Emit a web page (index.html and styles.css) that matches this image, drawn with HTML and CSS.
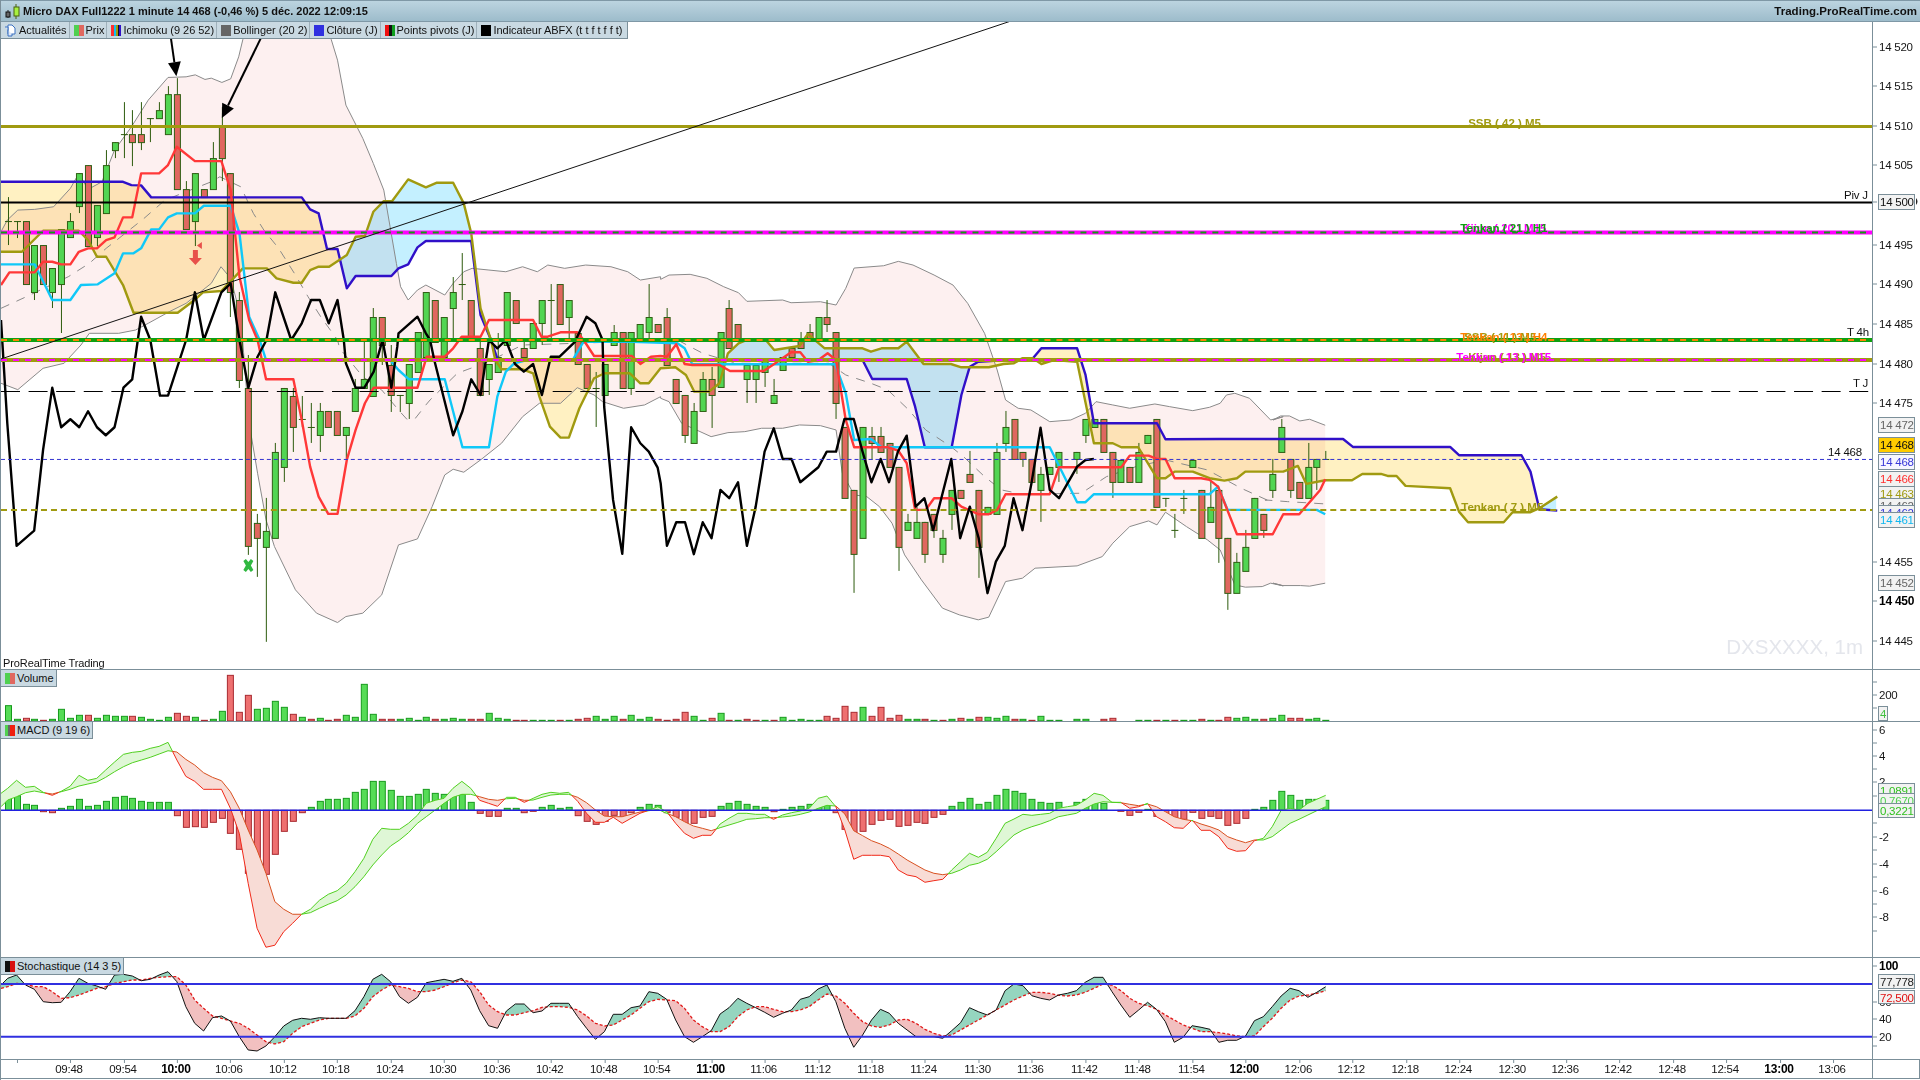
FILE: index.html
```html
<!DOCTYPE html>
<html lang="fr">

<head>
	<meta charset="UTF-8">
	<title>Micro DAX Full1222 | ProRealTime</title>
	<link rel="stylesheet" href="styles.css">
</head>

<body>
	<div class="window">
		<header class="title-bar">
			<svg class="title-icon" viewBox="0 0 18 15">
				<path d="M5 6V14" stroke="#222" />
				<rect x="3" y="8" width="4" height="5" fill="#666" stroke="#111" />
				<path d="M13 0V15" stroke="#486010" />
				<rect x="11" y="3" width="5" height="9" fill="#a8f040" stroke="#486010" />
			</svg>
			<span class="title-text">Micro DAX Full1222 1 minute 14 468 (-0,46 %) 5 déc. 2022 12:09:15</span>
			<span class="title-site">Trading.ProRealTime.com</span>
		</header>

		<section class="pane pane-main">
			<div class="plot">
				<svg id="main-chart" class="chart" viewBox="0 22 1872 647"></svg>
				<div class="legend">
					<span class="legend-item">
						<svg class="news-icon" viewBox="0 0 12 13">
							<path d="M4 1H8L11 4V10H4Z" fill="#fff" stroke="#3a70c0" />
							<path d="M1 3H4V12H8V10" fill="#dde8f8" stroke="#3a70c0" />
						</svg>
						Actualités
					</span>
					<span class="legend-item"><i class="swatch sw-price"></i>Prix</span>
					<span class="legend-item"><i class="swatch sw-ichimoku"></i>Ichimoku (9 26 52)</span>
					<span class="legend-item"><i class="swatch sw-bollinger"></i>Bollinger (20 2)</span>
					<span class="legend-item"><i class="swatch sw-close"></i>Clôture (J)</span>
					<span class="legend-item"><i class="swatch sw-pivots"></i>Points pivots (J)</span>
					<span class="legend-item legend-last"><i class="swatch sw-abfx"></i>Indicateur ABFX (t t f t f f t)</span>
				</div>
				<span class="broker">ProRealTime Trading</span>
				<span class="watermark">DXSXXXX, 1m</span>
			</div>
			<svg id="main-axis" class="axis" viewBox="1872 22 47 647"></svg>
		</section>

		<section class="pane pane-volume">
			<div class="plot">
				<svg id="volume-chart" class="chart" viewBox="0 670 1872 51"></svg>
				<div class="legend">
					<span class="legend-item"><i class="swatch sw-price"></i>Volume</span>
				</div>
			</div>
			<svg id="volume-axis" class="axis" viewBox="1872 670 47 51"></svg>
		</section>

		<section class="pane pane-macd">
			<div class="plot">
				<svg id="macd-chart" class="chart" viewBox="0 722 1872 235"></svg>
				<div class="legend">
					<span class="legend-item"><i class="swatch sw-macd"></i>MACD (9 19 6)</span>
				</div>
			</div>
			<svg id="macd-axis" class="axis" viewBox="1872 722 47 235"></svg>
		</section>

		<section class="pane pane-stoch">
			<div class="plot">
				<svg id="stoch-chart" class="chart" viewBox="0 958 1872 101"></svg>
				<div class="legend">
					<span class="legend-item"><i class="swatch sw-stoch"></i>Stochastique (14 3 5)</span>
				</div>
			</div>
			<svg id="stoch-axis" class="axis" viewBox="1872 958 47 101"></svg>
		</section>

		<section class="pane pane-time">
			<svg id="time-axis" class="chart" viewBox="0 1060 1872 18"></svg>
			<div class="time-corner"></div>
		</section>
	</div>
	<script src="chart.js"></script>
</body>

</html>
```

FILE: styles.css
```css
html,
body {
	margin: 0;
	height: 100%;
	overflow: hidden;
	background: #fff;
}

.window {
	width: 1920px;
	height: 1080px;
	box-sizing: border-box;
	display: flex;
	flex-direction: column;
	border-left: 1px solid #7b8f99;
	font-family: "Liberation Sans", Arial, sans-serif;
	color: #111;
}

.title-bar {
	height: 22px;
	box-sizing: border-box;
	flex: none;
	display: flex;
	align-items: center;
	border-top: 1px solid #7f98a6;
	border-bottom: 1px solid #7f98a6;
	background: linear-gradient(#bcd4e0, #9dbccb);
	padding: 0 3px 0 2px;
	font-size: 11.5px;
	font-weight: bold;
}

.title-icon {
	width: 18px;
	height: 15px;
	margin-right: 2px;
}

.title-text {
	flex: 1;
	font-size: 11px;
}

.title-site {
	letter-spacing: 0.05px;
}

.pane {
	flex: none;
	box-sizing: border-box;
	display: flex;
	border-bottom: 1px solid #7b8f99;
}

.pane-main {
	height: 648px;
}

.pane-volume {
	height: 52px;
}

.pane-macd {
	height: 236px;
}

.pane-stoch {
	height: 102px;
}

.pane-time {
	height: 19px;
}

.plot {
	position: relative;
	width: 1871px;
	flex: none;
}

.chart {
	display: block;
	width: 1871px;
	height: 100%;
	flex: none;
}

.axis {
	display: block;
	width: 47px;
	height: 100%;
	flex: none;
	border-left: 1px solid #7b8f99;
	overflow: hidden;
}

.time-corner {
	width: 47px;
	border-left: 1px solid #7b8f99;
	border-right: 1px solid #7b8f99;
}

.legend {
	position: absolute;
	left: 0;
	top: 0;
	display: flex;
	height: 16px;
	background: #c9d9e2;
	border-right: 1px solid #7b8f99;
	border-bottom: 1px solid #7b8f99;
	font-size: 11px;
}

.legend-item {
	display: flex;
	align-items: center;
	padding: 0 2px 0 3px;
	border-right: 1px solid #9fb0ba;
	white-space: nowrap;
	letter-spacing: -0.02px;
}

.legend-item:last-child {
	border-right: 0;
}

.legend-last {
	padding-right: 5px;
}

.news-icon {
	width: 12px;
	height: 13px;
	margin-right: 3px;
}

.swatch {
	display: block;
	width: 10px;
	height: 11px;
	margin: 0 2px 0 1px;
}

.sw-price {
	background: linear-gradient(90deg, #50d050 50%, #e06860 50%);
}

.sw-ichimoku {
	background: linear-gradient(90deg, #ff3030 25%, #10c0f0 25% 45%, #a09a10 45% 65%, #111 65% 82%, #3010c8 82%);
}

.sw-bollinger {
	background: #666;
}

.sw-close {
	background: #3030e0;
}

.sw-pivots {
	background: linear-gradient(90deg, #f01010 40%, #111 40% 65%, #10a020 65%);
}

.sw-abfx {
	background: #000;
}

.sw-macd {
	background: linear-gradient(90deg, #50d050 35%, #666 35% 50%, #f02010 50%);
}

.sw-stoch {
	background: linear-gradient(90deg, #111 50%, #d81010 50%);
}

.broker {
	position: absolute;
	left: 2px;
	bottom: 0;
	font-size: 11px;
	line-height: 12px;
	letter-spacing: -0.1px;
}

.watermark {
	position: absolute;
	right: 9px;
	bottom: 9px;
	font-size: 20.5px;
	line-height: 26px;
	color: #e4e6ec;
}

.tick {
	font-size: 11.5px;
	letter-spacing: -0.25px;
	fill: #151515;
}

.tick-strong {
	font-size: 12px;
	font-weight: bold;
	fill: #000;
}

.line-label {
	font-size: 11.5px;
	font-weight: bold;
}

.plain-label {
	font-size: 11.5px;
	letter-spacing: -0.2px;
	fill: #111;
}

.cloud {
	mix-blend-mode: multiply;
}

svg text {
	font-family: "Liberation Sans", Arial, sans-serif;
}
```

FILE: chart.js
```js
// Price chart panes. Coordinates are screen pixels, each svg viewBox is set up for that.
const NS = 'http://www.w3.org/2000/svg';
const X0 = 176; // x of the 10:00 bar
const DX = 8.91; // px per minute
const xi = (i) => X0 + DX * i;

function el(parent, name, attrs, text) {
	const node = document.createElementNS(NS, name);
	for (const k in attrs) node.setAttribute(k, attrs[k]);
	if (text !== undefined) node.textContent = text;
	parent.appendChild(node);
	return node;
}
const pts = (list) => list.map((p) => p[0].toFixed(1) + ',' + p[1].toFixed(1)).join(' ');
function poly(svg, list, color, width, dash) {
	const attrs = { points: pts(list), fill: 'none', stroke: color, 'stroke-width': width, 'stroke-linejoin': 'round' };
	if (dash) attrs['stroke-dasharray'] = dash;
	return el(svg, 'polyline', attrs);
}

// the values below were read off zoomed crops, so each helper converts its own crop
const z1 = (l) => l.map((p) => [p[0] / 2.376, p[1] / 3]);
const z2 = (l) => l.map((p) => [p[0] / 2.376, 340 + p[1] / 3]);
const z3 = (l) => l.map((p) => [660 + p[0] / 2.376, 260 + p[1] / 3]);
const z5 = (l) => l.map((p) => [1220 + p[0] / 2.24, 320 + p[1] / 3]);

function interp(line, x) {
	if (x <= line[0][0]) return line[0][1];
	for (let i = 1; i < line.length; i++) {
		if (x <= line[i][0]) {
			const t = (x - line[i - 1][0]) / (line[i][0] - line[i - 1][0] || 1);
			return line[i - 1][1] + t * (line[i][1] - line[i - 1][1]);
		}
	}
	return line[line.length - 1][1];
}

// split two series with the same x values in runs where a stays above or below b
function runs(a, b) {
	const out = [];
	let cur = null;
	for (let i = 0; i < a.length; i++) {
		const up = a[i][1] <= b[i][1];
		if (cur && cur.up !== up) {
			const d0 = a[i - 1][1] - b[i - 1][1];
			const d1 = a[i][1] - b[i][1];
			const t = d0 / (d0 - d1 || 1);
			const cross = [a[i - 1][0] + t * (a[i][0] - a[i - 1][0]), a[i - 1][1] + t * (a[i][1] - a[i - 1][1])];
			cur.a.push(cross);
			cur.b.push(cross);
			out.push(cur);
			cur = { up: up, a: [cross], b: [cross] };
		}
		if (!cur) cur = { up: up, a: [], b: [] };
		cur.a.push(a[i]);
		cur.b.push(b[i]);
	}
	if (cur) out.push(cur);
	return out;
}
function bandFill(svg, parts, upColor, downColor, cls) {
	parts.forEach((r) => {
		const attrs = { points: pts(r.a.concat(r.b.slice().reverse())), fill: r.up ? upColor : downColor };
		if (cls) attrs.class = cls;
		el(svg, 'polygon', attrs);
	});
}

/* ---------- main pane data ---------- */
const bbUpper = z1([[0, 695], [15, 660], [40, 630], [80, 628], [125, 620], [165, 565], [185, 520], [207, 568], [240, 545], [270, 450], [310, 380], [350, 300], [397, 232], [440, 230], [462, 224], [485, 238], [500, 234], [525, 247], [546, 236], [565, 170], [575, 118], [600, 30], [760, 30], [785, 118], [800, 180], [820, 315], [860, 415], [885, 490], [910, 570], [925, 680], [940, 790], [950, 860], [968, 900], [990, 870], [1010, 855], [1055, 885], [1075, 850], [1100, 815], [1120, 805], [1160, 810], [1200, 815], [1240, 800], [1275, 815], [1300, 795], [1340, 805], [1390, 795], [1450, 800], [1490, 815], [1520, 840], [1568, 830]])
	.concat(z3([[0, 58], [20, 45], [70, 43], [110, 55], [150, 80], [185, 98], [205, 124], [290, 120], [310, 128], [380, 125], [417, 135], [440, 85], [460, 24], [530, 17], [565, 4], [600, 15], [650, 45], [695, 75], [730, 130], [770, 220], [800, 330], [820, 420], [850, 445], [880, 450], [925, 485], [975, 480], [1010, 460], [1035, 425], [1075, 435], [1115, 445], [1175, 432], [1210, 440], [1265, 452], [1305, 442], [1330, 430], [1345, 405], [1365, 400], [1400, 415], [1450, 480], [1480, 470]]))
	.concat(z5([[118, 300], [135, 288], [155, 288], [178, 303], [200, 298], [235, 316]]));
const bbLower = z2([[0, 130], [40, 149], [100, 85], [150, 70], [190, 15]])
	.concat(z1([[210, 1000], [280, 1000], [320, 990], [350, 970], [400, 935], [440, 910], [470, 880], [500, 850], [523, 800], [546, 835], [570, 950]]))
	.concat(z2([[590, 250], [610, 400], [630, 540], [650, 620], [700, 750], [750, 820], [800, 848], [820, 830], [860, 820], [905, 765], [945, 615], [990, 597], [1025, 500], [1055, 405], [1075, 388], [1100, 397], [1140, 360], [1190, 310], [1240, 230], [1280, 190], [1330, 190], [1370, 143], [1410, 165], [1430, 185], [1480, 205], [1530, 195], [1568, 170]]))
	.concat(z3([[0, 415], [20, 425], [50, 490], [85, 510], [120, 530], [160, 518], [200, 515], [240, 505], [290, 505], [330, 495], [380, 497], [417, 510], [432, 640], [460, 705], [490, 710], [520, 740], [550, 790], [580, 885], [620, 960], [670, 1045], [710, 1065], [755, 1080], [780, 1072], [820, 965], [860, 955], [890, 925], [990, 918], [1050, 890], [1075, 850], [1115, 800], [1160, 783], [1180, 795], [1200, 757], [1250, 800], [1300, 840], [1330, 870], [1365, 975], [1390, 982], [1430, 980], [1450, 970], [1480, 978]]))
	.concat(z5([[118, 790], [140, 797], [180, 797], [200, 799], [235, 790]]));
const bbMid = z1([[0, 925], [60, 890], [160, 830], [210, 790], [250, 745], [290, 705], [340, 655], [390, 600], [440, 575], [500, 545], [520, 530], [570, 560], [600, 640], [625, 690], [660, 745], [700, 825], [730, 890], [760, 950], [800, 1020]])
	.concat(z2([[805, 25], [860, 110], [905, 150], [945, 210], [965, 238], [985, 235], [1010, 195], [1020, 180], [1085, 100], [1110, 88], [1150, 70], [1240, 15]]))
	.concat(z3([[40, 240], [100, 280], [180, 310], [400, 310], [440, 345], [500, 370], [540, 390], [590, 450], [630, 510], [690, 560], [720, 590], [770, 650], [810, 690], [860, 703], [1000, 700], [1060, 650], [1130, 620], [1200, 600], [1300, 630], [1380, 685], [1450, 725]]))
	.concat(z5([[100, 540], [150, 545], [235, 552]]));

const spanB = z1([[0, 545], [290, 545], [310, 555], [333, 556], [357, 592], [715, 592], [735, 628], [755, 640], [775, 747], [800, 747], [822, 865], [843, 828], [928, 828], [945, 805], [968, 793], [990, 742], [1010, 723], [1118, 723], [1140, 945], [1165, 1020]])
	.concat([[497, 360]])
	.concat(z3([[480, 300], [503, 357], [585, 357], [605, 440], [628, 562], [692, 562], [715, 405], [735, 320], [755, 305], [885, 295], [905, 265], [990, 265], [1010, 345], [1030, 490], [1180, 490], [1200, 538]]))
	.concat(z5([[0, 357], [275, 357], [297, 381], [515, 381], [535, 406], [675, 406], [695, 455], [715, 568], [755, 572]]));
const spanA = z1([[0, 755], [50, 755], [100, 692], [185, 692], [207, 720], [228, 770], [250, 770], [290, 855], [315, 938], [420, 938], [460, 900], [480, 877], [524, 873], [575, 805], [632, 805], [655, 835], [695, 848], [715, 848], [735, 810], [755, 800], [780, 800], [822, 765], [843, 710], [865, 708], [885, 635], [910, 603], [930, 603], [968, 538], [1010, 562], [1035, 548], [1075, 548], [1100, 610], [1118, 700], [1140, 925], [1165, 1020]])
	.concat(z2([[1175, 60], [1190, 88], [1240, 88], [1265, 100], [1280, 170], [1305, 260], [1330, 293], [1350, 293], [1375, 205], [1410, 115], [1435, 100], [1495, 100], [1520, 130], [1540, 130], [1568, 85]]))
	.concat(z3([[35, 322], [60, 345], [80, 395], [115, 395], [140, 370], [160, 280], [185, 250], [205, 240], [250, 240], [270, 270], [330, 258], [350, 222], [390, 265], [480, 265], [500, 275], [525, 265], [565, 265], [585, 245], [625, 312], [690, 312], [715, 322], [780, 322], [815, 312], [840, 310], [860, 295], [885, 295], [905, 312], [935, 300], [990, 305], [1030, 550], [1075, 550], [1095, 562], [1135, 562], [1180, 655], [1200, 655], [1222, 635], [1265, 635], [1305, 655], [1340, 662], [1370, 655], [1390, 635], [1480, 635], [1515, 618], [1535, 672]]))
	.concat(z5([[235, 481], [295, 481], [318, 462], [360, 462], [375, 468], [395, 468], [415, 498], [515, 505], [535, 575], [555, 607], [635, 607], [655, 577], [695, 577], [715, 565], [755, 530]]));
const tenkan = z1([[0, 855], [20, 817], [80, 817], [100, 785], [122, 785], [143, 793], [165, 793], [185, 755], [207, 745], [228, 745], [250, 720], [270, 712], [290, 652], [312, 652], [333, 520], [376, 520], [397, 495], [418, 440], [461, 483], [524, 483], [546, 570], [567, 830], [590, 960], [610, 1020]])
	.concat(z2([[630, 118], [695, 118], [715, 240], [735, 380], [755, 470], [778, 522], [800, 522], [822, 360], [843, 270], [865, 190], [886, 143], [990, 143], [1012, 50], [1055, 50], [1075, 25]]))
	.concat(z1([[1095, 1010], [1140, 1010], [1160, 960], [1265, 960], [1285, 1010], [1300, 1010], [1330, 997], [1370, 997], [1385, 1020]]))
	.concat(z2([[1410, 48], [1500, 48], [1520, 72], [1545, 50], [1568, 48]]))
	.concat(z3([[15, 290], [37, 253], [57, 312], [75, 315], [140, 315], [165, 333], [245, 333], [270, 312], [310, 277], [332, 277], [350, 305], [375, 300], [397, 280], [417, 300], [440, 480], [460, 562], [540, 562], [565, 572], [585, 610], [605, 750], [630, 750], [650, 715], [692, 715], [715, 740], [755, 763], [780, 763], [800, 750], [820, 703], [925, 703], [947, 622], [1095, 622], [1115, 587], [1160, 587], [1180, 597], [1200, 597], [1222, 655], [1285, 655], [1305, 660], [1325, 680], [1370, 823], [1455, 823], [1480, 763], [1518, 763], [1568, 690]]))
	.concat(z5([[235, 478]]));
const kijun = z1([[0, 793], [80, 793], [122, 900], [165, 900], [190, 855], [230, 853], [270, 820], [290, 760], [315, 760], [333, 745], [357, 688], [376, 688], [397, 652], [418, 640], [461, 640], [482, 617], [546, 617], [567, 700], [590, 950], [615, 1020]])
	.concat(z2([[630, 60], [925, 60], [945, 90], [970, 118], [1055, 118], [1097, 322], [1160, 322], [1180, 170], [1200, 95], [1220, 70], [1250, 60], [1360, 58], [1385, 5], [1500, 5]]))
	.concat(z3([[40, 250], [57, 265], [75, 313], [415, 313], [440, 400], [460, 540], [500, 537], [525, 562], [925, 562], [990, 727], [1010, 727], [1030, 703], [1305, 703], [1325, 680], [1348, 750], [1560, 750]]))
	.concat(z5([[235, 583]]));
const abfx = z1([[0, 960]])
	.concat(z2([[15, 250], [37, 618], [79, 572], [100, 330], [122, 143], [143, 262], [165, 238], [186, 262], [207, 214], [228, 262], [249, 286], [270, 262], [291, 143], [312, 118]]))
	.concat(z1([[333, 950]]))
	.concat(z2([[355, 0], [378, 167], [397, 167], [440, 0]]))
	.concat(z1([[461, 877], [482, 1020], [524, 877], [546, 850], [567, 1020]]))
	.concat(z2([[588, 143], [610, 50], [631, 0]]))
	.concat(z1([[652, 877], [690, 1020], [715, 970], [737, 900], [758, 900], [779, 970], [800, 900], [815, 1020]]))
	.concat(z2([[820, 70], [843, 143], [864, 143], [886, 95], [907, 0], [928, 143], [942, 20]]))
	.concat(z1([[945, 1000], [990, 950], [1010, 1000], [1020, 1020]]))
	.concat(z2([[1030, 60], [1075, 286], [1097, 214], [1118, 118], [1140, 165], [1160, 0], [1180, 25], [1200, 0], [1222, 72], [1243, 95], [1265, 72], [1286, 165], [1307, 50], [1328, 50], [1365, 5]]))
	.concat(z1([[1370, 1010], [1392, 950], [1413, 970], [1430, 1020]]))
	.concat(z2([[1434, 200], [1455, 480], [1477, 642], [1498, 262], [1520, 310], [1540, 335], [1561, 383]]))
	.concat(z3([[0, 670], [15, 858], [37, 787], [58, 787], [79, 883], [100, 787], [121, 835], [142, 690], [163, 715], [184, 667], [205, 858], [226, 740], [247, 575], [269, 505], [290, 597], [311, 597], [332, 667], [375, 622], [395, 575], [417, 575], [437, 477], [459, 477], [480, 575], [501, 667], [523, 597], [543, 667], [564, 575], [585, 527], [606, 740], [627, 715], [648, 811], [691, 597], [712, 835], [735, 740], [756, 835], [777, 1000], [797, 905], [818, 858], [839, 715], [860, 811], [882, 667], [903, 503], [925, 690], [947, 715], [990, 620], [1010, 600], [1030, 597]]));

// bars from i = -19 (09:41): [body top, body bottom, high, low, colour]
const bars = [
	[221, 221, 197, 245, 'd'], [221, 221, 221, 238, 'd'], [221, 284, 221, 284, 'r'], [245, 292, 245, 300, 'g'], [245, 284, 245, 284, 'r'],
	[268, 292, 268, 308, 'g'], [229, 284, 229, 333, 'g'], [221, 237, 213, 237, 'g'], [173, 206, 173, 213, 'g'], [165, 246, 165, 246, 'r'],
	[205, 237, 205, 246, 'g'], [165, 213, 150, 213, 'g'], [142, 150, 142, 158, 'g'], [134, 134, 102, 158, 'd'], [134, 142, 110, 166, 'r'],
	[134, 142, 102, 150, 'r'], [118, 118, 118, 142, 'd'], [110, 118, 102, 118, 'g'], [94, 134, 86, 134, 'g'],
	[94, 189, 78, 189, 'r'], [189, 229, 181, 229, 'r'], [173, 221, 173, 246, 'g'], [189, 197, 189, 197, 'r'], [158, 189, 142, 189, 'g'],
	[126, 158, 107, 181, 'r'], [173, 292, 173, 317, 'r'], [300, 380, 292, 388, 'r'], [388, 546, 355, 555, 'r'], [523, 538, 514, 577, 'r'],
	[531, 547, 498, 642, 'g'], [452, 538, 443, 538, 'g'], [388, 467, 388, 482, 'g'], [396, 427, 388, 452, 'r'], [419, 419, 396, 427, 'd'],
	[427, 427, 403, 443, 'd'], [411, 435, 403, 452, 'g'], [411, 427, 411, 427, 'r'], [411, 435, 411, 435, 'r'], [427, 435, 427, 459, 'g'],
	[388, 411, 379, 411, 'g'], [379, 388, 340, 388, 'g'], [317, 396, 308, 396, 'g'], [317, 345, 317, 365, 'r'], [365, 395, 345, 412, 'r'],
	[395, 395, 395, 412, 'd'], [364, 403, 364, 419, 'g'], [332, 372, 332, 372, 'g'], [292, 357, 292, 357, 'g'], [300, 342, 300, 342, 'r'],
	[317, 357, 317, 357, 'g'], [292, 308, 277, 340, 'g'], [284, 284, 253, 300, 'd'], [300, 340, 300, 340, 'r'], [348, 395, 340, 395, 'r'],
	[364, 379, 364, 395, 'g'], [357, 372, 333, 372, 'g'], [292, 345, 292, 345, 'g'], [300, 323, 300, 323, 'r'], [348, 357, 340, 360, 'r'],
	[323, 348, 323, 348, 'g'], [300, 323, 300, 345, 'g'], [300, 300, 284, 340, 'd'], [284, 324, 284, 324, 'r'], [300, 317, 300, 340, 'g'],
	[333, 364, 333, 364, 'r'], [364, 388, 364, 388, 'r'], [388, 388, 372, 427, 'd'], [364, 395, 364, 395, 'g'], [332, 345, 325, 345, 'g'],
	[332, 388, 332, 388, 'r'], [332, 388, 332, 395, 'g'], [324, 340, 324, 340, 'g'], [317, 332, 284, 340, 'g'], [324, 332, 324, 332, 'r'],
	[317, 365, 308, 365, 'r'], [379, 403, 379, 403, 'r'], [395, 435, 395, 443, 'r'], [411, 443, 403, 443, 'g'], [379, 411, 372, 411, 'g'],
	[379, 395, 367, 428, 'r'], [332, 387, 332, 387, 'g'], [308, 348, 300, 348, 'r'], [324, 340, 324, 340, 'r'], [365, 379, 365, 403, 'g'],
	[365, 379, 365, 403, 'g'], [360, 372, 360, 387, 'g'], [395, 403, 379, 403, 'g'], [357, 370, 357, 370, 'g'], [348, 357, 348, 357, 'r'],
	[340, 348, 332, 348, 'r'], [332, 340, 324, 340, 'r'], [317, 340, 317, 340, 'g'], [317, 324, 300, 332, 'r'], [332, 403, 332, 419, 'r'],
	[427, 498, 427, 498, 'r'], [490, 554, 490, 593, 'r'], [427, 538, 427, 538, 'g'], [436, 443, 427, 460, 'r'], [436, 452, 427, 452, 'r'],
	[443, 467, 443, 467, 'r'], [467, 547, 467, 571, 'r'], [522, 530, 514, 530, 'g'], [522, 538, 507, 538, 'g'], [522, 554, 522, 563, 'r'],
	[514, 530, 514, 538, 'r'], [538, 554, 530, 563, 'g'], [490, 514, 490, 530, 'g'], [490, 498, 490, 498, 'r'], [474, 482, 451, 482, 'r'],
	[490, 547, 490, 578, 'r'], [507, 514, 507, 514, 'g'], [452, 514, 443, 514, 'g'], [427, 443, 411, 452, 'g'], [419, 459, 419, 459, 'r'],
	[452, 459, 452, 467, 'r'], [459, 482, 459, 482, 'r'], [474, 490, 467, 522, 'g'], [467, 474, 467, 474, 'g'], [452, 467, 452, 482, 'g'],
	null,
	[452, 459, 452, 474, 'g'], [419, 435, 419, 443, 'g'], [419, 427, 419, 427, 'g'], [419, 452, 419, 452, 'r'], [452, 482, 452, 498, 'r'],
	[460, 482, 460, 482, 'g'], [467, 482, 467, 482, 'r'], [452, 482, 443, 482, 'g'], [435, 443, 435, 443, 'g'], [419, 507, 419, 507, 'r'],
	[498, 498, 498, 507, 'd'], [530, 530, 514, 538, 'd'], [498, 498, 490, 514, 'd'], [460, 467, 460, 467, 'g'], [490, 538, 490, 538, 'r'],
	[507, 522, 482, 522, 'g'], [490, 538, 490, 563, 'r'], [538, 593, 538, 610, 'r'], [562, 593, 553, 593, 'g'], [547, 571, 530, 571, 'g'],
	[498, 538, 498, 538, 'g'], [514, 530, 514, 538, 'r'], [474, 490, 459, 498, 'g'], [427, 452, 419, 452, 'g'], [459, 490, 459, 498, 'r'],
	[482, 498, 482, 498, 'r'], [467, 498, 443, 498, 'g'], [459, 467, 459, 490, 'g'], [459, 459, 451, 459, 'd']
];

/* ---------- main pane ---------- */
const main = document.getElementById('main-chart');
el(main, 'polygon', { points: pts(bbUpper.concat(bbLower.slice().reverse())), fill: '#fdf0f0' });

const grid = [];
for (let x = 0; x <= 1557; x += 2) grid.push(x);
const aSeries = grid.map((x) => [x, interp(spanA, x)]);
const bSeries = grid.map((x) => [x, interp(spanB, x)]);
bandFill(main, runs(aSeries, bSeries), '#c4f0ff', '#fff1c2', 'cloud');

poly(main, bbUpper, '#8a8a8a', 1);
poly(main, bbLower, '#8a8a8a', 1);
poly(main, bbMid, '#8a8a8a', 1, '9 8');

// candles
bars.forEach((b, n) => {
	if (!b) return;
	const x = Math.round(xi(n - 19));
	el(main, 'line', { x1: x + 0.5, x2: x + 0.5, y1: b[2], y2: b[3], stroke: '#2c5a0c', 'stroke-width': 1 });
	if (b[4] === 'd') {
		el(main, 'line', { x1: x - 3, x2: x + 4, y1: b[0] + 0.5, y2: b[0] + 0.5, stroke: '#2c5a0c', 'stroke-width': 1 });
	} else {
		el(main, 'rect', { x: x - 2.5, y: b[0] + 0.5, width: 6, height: b[1] - b[0], fill: b[4] === 'g' ? '#52d552' : '#e0675f', stroke: '#2f5f14', 'stroke-width': 1 });
	}
});

poly(main, spanB, '#3010c8', 2.4);
poly(main, spanA, '#a09a10', 2.4);
poly(main, kijun, '#10c8f8', 2.4);
poly(main, tenkan, '#ff3838', 2.4);
poly(main, abfx, '#000', 2.4);

function hline(y, color, width, dash) {
	const attrs = { x1: 0, x2: 1872, y1: y, y2: y, stroke: color, 'stroke-width': width };
	if (dash) attrs['stroke-dasharray'] = dash;
	el(main, 'line', attrs);
}
hline(126.5, '#a09a10', 3);
hline(202.5, '#000', 2);
hline(232.5, '#ff00ff', 4);
hline(232.5, '#10a010', 2, '6 6');
hline(340, '#10a010', 4);
hline(340, '#ff8000', 2, '6 6');
hline(360, '#a09a10', 4);
hline(360, '#ff00ff', 2, '6 6');
hline(391.5, '#000', 1.2, '19 8.6');
hline(459.5, '#3030d0', 1, '4 3');
hline(510, '#a09a10', 2, '6 4');

// trend line and the two hand drawn arrows
el(main, 'line', { x1: 0, y1: 359, x2: 1010, y2: 21, stroke: '#111', 'stroke-width': 1 });
function arrow(x1, y1, x2, y2) {
	const a = Math.atan2(y2 - y1, x2 - x1);
	const back = 14;
	const side = 6.5;
	const bx = x2 - back * Math.cos(a);
	const by = y2 - back * Math.sin(a);
	el(main, 'line', { x1: x1, y1: y1, x2: bx, y2: by, stroke: '#000', 'stroke-width': 2 });
	el(main, 'polygon', {
		points: pts([[x2, y2], [bx - side * Math.sin(a), by + side * Math.cos(a)], [bx + side * Math.sin(a), by - side * Math.cos(a)]]),
		fill: '#000'
	});
}
arrow(170, 38, 175.5, 76);
arrow(260, 38, 221, 118);

// signals on the chart
el(main, 'path', { d: 'M192 250H197V258H201L194.500 265L188 258H192Z', fill: '#e8504a' });
el(main, 'path', { d: 'M201 242V249L196 245.500Z', fill: '#e8504a' });
el(main, 'path', { d: 'M242.500 561L245 559L247.500 562L250 559L252.500 561L250 565.500L252.500 570L250 572L247.500 569L245 572L242.500 570L245 565.500Z', fill: '#30b840' });

function label(svg, x, y, text, color, cls) {
	return el(svg, 'text', { x: x, y: y, fill: color, class: cls || 'line-label' }, text);
}
label(main, 1468, 127, 'SSB ( 42 ) M5', '#a09a10');
label(main, 1462, 232, 'Kijun ( 20 ) M15', '#ff00ff');
label(main, 1460, 232, 'Tenkan ( 21 ) H1', '#10a010');
label(main, 1464, 341, 'SSB ( 11 ) M5', '#a09a10');
label(main, 1460, 341, 'Tenkan ( 13 ) H4', '#ff8000');
label(main, 1468, 361, 'Kijun ( 13 ) M5', '#a09a10');
label(main, 1456, 361, 'Tenkan ( 13 ) M15', '#ff00ff');
label(main, 1461, 511, 'Tenkan ( 7 ) M5', '#a09a10');
label(main, 1844, 199, 'Piv J', '#111', 'plain-label');
label(main, 1847, 336, 'T 4h', '#111', 'plain-label');
label(main, 1853, 387, 'T J', '#111', 'plain-label');
label(main, 1828, 456, '14 468', '#3838d8', 'plain-label');

/* ---------- axes ---------- */
function tick(svg, y, text, strong) {
	el(svg, 'line', { x1: 1872, x2: 1876, y1: y, y2: y, stroke: '#7b8f99' });
	if (text) el(svg, 'text', { x: 1878, y: y + 4, class: strong ? 'tick tick-strong' : 'tick' }, text);
}
function box(svg, top, height, text, color, fill, width) {
	el(svg, 'rect', { x: 1877.5, y: top + 0.5, width: width || 36, height: height, fill: fill || '#f2f2f2', stroke: '#7b8f99' });
	el(svg, 'text', { x: 1879, y: top + 12, class: 'tick', style: 'fill:' + color }, text);
}

const mainAxis = document.getElementById('main-axis');
[[47, '14 520'], [86, '14 515'], [126, '14 510'], [165, '14 505'], [245, '14 495'], [284, '14 490'], [324, '14 485'], [364, '14 480'], [403, '14 475'], [562, '14 455'], [641, '14 445']]
	.forEach((t) => tick(mainAxis, t[0], t[1]));
tick(mainAxis, 601, '14 450', true);
tick(mainAxis, 202);
box(mainAxis, 194, 15, '14 500', '#111');
el(mainAxis, 'path', { d: 'M1915 198Q1918 201.500 1915 205Z', fill: '#222' });
box(mainAxis, 417, 15, '14 472', '#666');
box(mainAxis, 437, 15, '14 468', '#111', '#ffcc00');
box(mainAxis, 454, 15, '14 468', '#3838d8', '#f6f6ff');
box(mainAxis, 471, 15, '14 466', '#ff3030');
box(mainAxis, 486, 15, '14 463', '#a09a10');
box(mainAxis, 498, 15, '14 462', '#666');
box(mainAxis, 505, 15, '14 462', '#3838d8');
box(mainAxis, 512, 15, '14 461', '#10b8f0');
box(mainAxis, 575, 15, '14 452', '#666');

const volAxis = document.getElementById('volume-axis');
[[682], [695, '200'], [708]].forEach((t) => tick(volAxis, t[0], t[1]));
box(volAxis, 706, 14, '4', '#40c040', '#f2f2f2', 9);

const macdAxis = document.getElementById('macd-axis');
[[730, '6'], [743], [756, '4'], [769], [782, '2'], [796], [823], [837, '-2'], [850], [864, '-4'], [877], [891, '-6'], [904], [917, '-8'], [931]]
	.forEach((t) => tick(macdAxis, t[0], t[1]));
box(macdAxis, 783, 14, '1,0891', '#30c020');
box(macdAxis, 793, 14, '0,7670', '#50d050');
box(macdAxis, 803, 14, '0,3221', '#30c020');

const stochAxis = document.getElementById('stoch-axis');
tick(stochAxis, 966, '100', true);
[[1002, '60'], [1019, '40'], [1037, '20'], [1046]].forEach((t) => tick(stochAxis, t[0], t[1]));
box(stochAxis, 974, 14, '77,778', '#222');
box(stochAxis, 990, 13, '72,500', '#e01010');

const timeAxis = document.getElementById('time-axis');
el(timeAxis, 'line', { x1: Math.round(xi(-18)) + 0.5, x2: Math.round(xi(-18)) + 0.5, y1: 1059, y2: 1063, stroke: '#7b8f99' });
for (let i = -12; i <= 186; i += 6) {
	const min = 600 + i;
	const hh = String(Math.floor(min / 60)).padStart(2, '0');
	const mm = String(min % 60).padStart(2, '0');
	const x = Math.round(xi(i));
	el(timeAxis, 'line', { x1: x + 0.5, x2: x + 0.5, y1: 1060, y2: 1063, stroke: '#7b8f99' });
	const strong = min % 60 === 0;
	el(timeAxis, 'text', { x: x - 1, y: 1073, 'text-anchor': 'middle', class: strong ? 'tick tick-strong' : 'tick' }, hh + ':' + mm);
}

/* ---------- volume ---------- */
const volume = document.getElementById('volume-chart');
const GREEN = ['#56dc56', '#169a1c'];
const RED = ['#ee7070', '#a82a30'];
const volData = ('137g 178g 175r 178g 181r 178g 148g 175g 166g 166r 175g 166g 169g 169g 169r 172g 178g 181g 172g 160r 169r 172g 181r 178g 154g 46r 157r 106r 148g 145g 124g 142g 163r 172g 178r 175g 181r 178r 166g 172g 73g 163g 178r 178r 178g 175g 181g 172g 178r 178g 175g 178g 178r 178r 160g 175g 178g 181r 181r 181g 181g 181g 181r 181g 178r 175r 169g 178g 169g 178r 166g 178g 172g 178r ' +
	'181r 178r 157r 169g 181g 175r 160g 181r 181g 178r 181r 181g 181r 172g 181g 178g 181g 181g 169r 175r 139r 157r 142g 169r 142r 175r 166r 178g 178g 178r 181g 181r 178g 175r 178g 172r 172g 175g 169g 178r 178g 181r 169g 181g 181g 0g 178g 178g 0g 178r 175r 0g 0g 181g 181g 181r 181g 181r 181g 181g 178r 181g 181r 172r 175g 172g 178g 178r 175g 166g 175r 175r 178g 175g 181g').split(' ');
volData.forEach((v, n) => {
	const z = parseInt(v, 10);
	if (!z) return;
	const c = v.endsWith('g') ? GREEN : RED;
	const top = 660 + z / 3;
	el(volume, 'rect', { x: Math.round(xi(n - 19)) - 2.5, y: top, width: 6, height: 721 - top, fill: c[0], stroke: c[1], 'stroke-width': 1 });
});

/* ---------- macd ---------- */
const macd = document.getElementById('macd-chart');
const ZERO = 810.3;
const histData = ('403g 407g 433g 436g 455r 458r 445g 439g 418g 439g 436g 424g 412g 409g 415g 424g 427g 427g 427g 467r 502r 500r 502r 487r 475r 520r 568r 640r 658r 643r 583r 514r 484r 458r 442g 424g 418g 418g 415g 397g 388g 364g 364g 391g 409g 409g 403g 388g 400g 403g 403g 403g 427g 460r 469r 469r 445g 445g 458r 454r 442g 436g 445g 442g 467r 484r 493r 484r 466r 472r 458r 442g 433g 436g ' +
	'458r 472r 493r 490r 472r 469r 439g 430g 424g 433g 439g 442g 455r 448g 442g 439g 433g 424g 427g 458r 508r 547r 514r 493r 481r 478r 499r 496r 487r 490r 472r 463r 439g 427g 415g 433g 427g 406g 388g 394g 400g 418g 427g 430g 427g 451g 427g 418g 418g 430g 451g 454r 466r 457r 448g 469r 475r 487r 478r 457r 475r 469r 475r 496r 490r 475r 448g 442g 421g 394g 406g 421g 418g 418g 421g').split(' ');
histData.forEach((v, n) => {
	const z = parseInt(v, 10);
	const y = 660 + z / 3;
	if (Math.abs(y - ZERO) < 0.5) return;
	const c = v.endsWith('g') ? GREEN : RED;
	el(macd, 'rect', { x: Math.round(xi(n - 19)) - 2.5, y: Math.min(y, ZERO), width: 6, height: Math.abs(y - ZERO), fill: c[0], stroke: c[1], 'stroke-width': 1 });
});

const fastZ = [385, 361, 382, 379, 397, 406, 394, 379, 346, 361, 355, 330, 306, 283, 277, 274, 265, 259, 247, 300, 349, 364, 388, 388, 388, 445, 520, 670, 805, 862, 856, 815, 790, 763, 748, 721, 703, 692, 670, 635, 595, 538, 505, 508, 508, 490, 466, 430, 421, 415, 385, 364, 385, 421, 430, 439, 412, 412, 427, 415, 403, 397, 400, 397, 424, 460, 487, 487, 472, 490, 475, 460, 451, 440,
	455, 490, 520, 535, 526, 526, 492, 475, 460, 460, 463, 463, 478, 465, 458, 453, 445, 415, 408, 440, 510, 598, 586, 586, 586, 590, 630, 645, 650, 667, 662, 658, 630, 605, 580, 592, 577, 535, 490, 477, 463, 466, 463, 460, 445, 440, 436, 420, 400, 406, 427, 427, 445, 440, 430, 470, 485, 503, 505, 480, 511, 511, 530, 565, 574, 572, 542, 535, 500, 451, 445, 450, 430, 418, 406];
const slowZ = [420, 410, 398, 393, 398, 402, 395, 388, 378, 372, 366, 352, 335, 320, 308, 300, 292, 282, 272, 276, 298, 315, 338, 352, 362, 395, 445, 510, 570, 640, 725, 748, 763, 763, 758, 745, 733, 722, 705, 680, 650, 615, 585, 558, 540, 518, 490, 470, 450, 430, 412, 403, 403, 410, 418, 421, 416, 415, 421, 420, 412, 405, 403, 403, 412, 428, 450, 468, 470, 470, 463, 456, 452, 448,
	460, 470, 485, 498, 505, 512, 503, 495, 487, 478, 476, 473, 473, 471, 468, 463, 456, 445, 436, 438, 462, 512, 527, 542, 552, 565, 582, 600, 615, 630, 640, 644, 640, 630, 616, 610, 598, 575, 550, 525, 510, 500, 492, 482, 470, 465, 460, 445, 432, 425, 427, 428, 433, 437, 432, 440, 455, 470, 478, 482, 492, 500, 510, 530, 540, 548, 540, 540, 530, 510, 490, 478, 465, 452, 440];
const toSeries = (list, base, firstI) => list.map((z, n) => [xi(firstI + n), base + z / 3]);
const fast = [[0, 660 + 400 / 3]].concat(toSeries(fastZ, 660, -19));
const slow = [[0, 660 + 440 / 3]].concat(toSeries(slowZ, 660, -19));
const macdRuns = runs(fast, slow);
bandFill(macd, macdRuns, '#dff7d6', '#f8dcd6');
macdRuns.forEach((r) => {
	const c = r.up ? '#50d020' : '#f02818';
	poly(macd, r.a, c, 1);
	poly(macd, r.b, r.up ? c : '#d85020', 1);
});
el(macd, 'line', { x1: 0, x2: 1872, y1: ZERO, y2: ZERO, stroke: '#2020e0', 'stroke-width': 1.5 });

/* ---------- stochastic ---------- */
const stoch = document.getElementById('stoch-chart');
const kLeft = [115, 105, 135, 148, 185, 188, 187, 155, 115, 130, 138, 148, 105, 103, 108, 122, 118, 105, 95, 125, 200, 250, 273, 233, 228, 243, 290, 330, 333, 318, 290, 258, 241, 235, 238, 233, 235, 235, 235, 212, 170, 118, 103, 125, 170, 190, 172, 128, 123, 118, 124, 115, 150, 212, 257, 265, 213, 192, 192, 218, 213, 190, 190, 190, 230, 265, 298, 275, 223, 223, 203, 198, 155];
const dLeft = [140, 130, 132, 140, 140, 155, 175, 173, 165, 155, 145, 140, 130, 125, 120, 120, 115, 112, 110, 110, 135, 180, 205, 228, 235, 243, 250, 265, 285, 305, 312, 305, 280, 260, 250, 240, 235, 235, 235, 228, 205, 170, 150, 135, 140, 145, 155, 155, 150, 140, 128, 120, 125, 155, 195, 215, 225, 225, 218, 212, 202, 200, 200, 202, 210, 228, 250, 258, 255, 240, 225, 205, 185];
const kRight = [100, 118, 180, 230, 247, 230, 212, 162, 143, 115, 130, 143, 157, 172, 160, 150, 118, 110, 87, 75, 125, 205, 262, 225, 180, 148, 160, 190, 210, 230, 230, 230, 235, 212, 188, 143, 155, 165, 150, 92, 72, 77, 107, 115, 120, 105, 100, 92, 67, 52, 52, 95, 135, 172, 150, 127, 148, 185, 247, 232, 197, 202, 208, 247, 241, 241, 228, 182, 170, 140, 108, 85, 92, 112, 97, 80];
const dRight = [118, 120, 122, 145, 180, 200, 215, 215, 200, 170, 150, 140, 140, 148, 155, 155, 150, 140, 120, 102, 108, 130, 160, 185, 198, 202, 195, 180, 178, 190, 208, 220, 228, 225, 210, 195, 180, 165, 150, 135, 120, 108, 97, 97, 100, 106, 108, 105, 97, 85, 72, 75, 92, 115, 130, 137, 148, 165, 180, 195, 205, 215, 215, 218, 222, 228, 230, 228, 200, 175, 145, 120, 108, 105, 100, 92];
const kLine = [[0, 940 + 135 / 3]].concat(toSeries(kLeft, 940, -19), toSeries(kRight, 960, 54));
const dLine = [[0, 940 + 145 / 3]].concat(toSeries(dLeft, 940, -19), toSeries(dRight, 960, 54));
bandFill(stoch, runs(kLine, dLine), '#95d5bf', '#f2c0c0');
poly(stoch, dLine, '#e01818', 1.3, '3 2');
poly(stoch, kLine, '#111', 1);
[984, 1036.7].forEach((y) => el(stoch, 'line', { x1: 0, x2: 1872, y1: y, y2: y, stroke: '#3030e0', 'stroke-width': 2 }));
```
